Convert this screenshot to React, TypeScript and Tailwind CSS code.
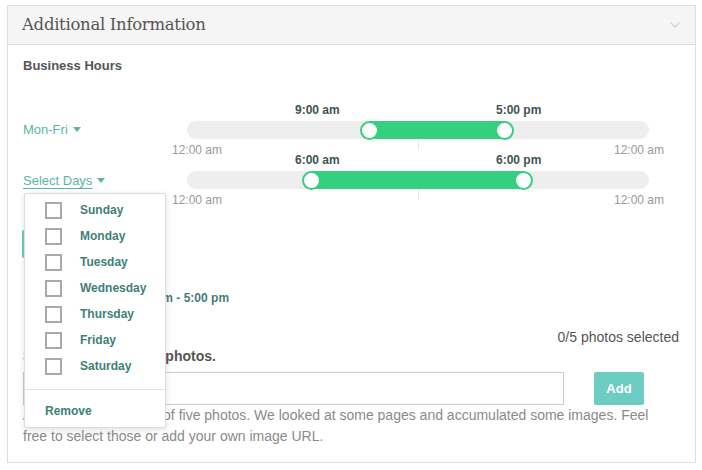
import React from 'react';
import { ChevronDown } from 'lucide-react';

const days = ['Sunday', 'Monday', 'Tuesday', 'Wednesday', 'Thursday', 'Friday', 'Saturday'];

const Caret: React.FC = () => (
  <svg width="8" height="5" viewBox="0 0 8 5" className="inline-block ml-[5px] mb-[2px]">
    <path d="M0 0 L8 0 L4 5 Z" fill="currentColor" />
  </svg>
);

type SliderProps = { startLabel: string; endLabel: string; from: number; to: number };

const HoursSlider: React.FC<SliderProps> = ({ startLabel, endLabel, from, to }) => (
  <div className="w-[462px]">
    <div className="h-[19px] pl-[108px] pt-[1px] flex text-[12px] leading-[14px] font-bold text-[#3d5450]">
      <span className="w-[201px]">{startLabel}</span>
      <span>{endLabel}</span>
    </div>
    <div className="relative h-[18px] rounded-full bg-[#eeeeee]">
      <div className="absolute top-0 h-[18px] bg-[#35d07f]" style={{ left: from, width: to - from }} />
      <div
        className="absolute top-0 w-[19px] h-[19px] -ml-[9px] -mt-[0.5px] rounded-full bg-white border-2 border-[#35d07f]"
        style={{ left: from }}
      />
      <div
        className="absolute top-0 w-[19px] h-[19px] -ml-[9px] -mt-[0.5px] rounded-full bg-white border-2 border-[#35d07f]"
        style={{ left: to }}
      />
    </div>
    <div className="h-[13px] -mx-[15px] flex justify-between text-[12px] leading-[14px] text-[#999]">
      <span className="mt-[4px]">12:00 am</span>
      <span className="w-px h-[11px] bg-[#e8e8e8]" />
      <span className="mt-[4px]">12:00 am</span>
    </div>
  </div>
);

const DaysMenu: React.FC = () => (
  <div className="absolute left-[1px] top-[41px] z-10 w-[142px] h-[235px] bg-white border border-[#dcdcdc] rounded-[2px] shadow-[0_2px_6px_rgba(0,0,0,0.12)]">
    <ul className="pt-[3px] pb-[10px]">
      {days.map((d) => (
        <li key={d} className="h-[26px] flex items-center pl-[20px]">
          <span className="w-[17px] h-[17px] border-2 border-[#a9a9a9] bg-white" />
          <span className="ml-[18px] text-[12px] font-bold text-[#3e8079]">{d}</span>
        </li>
      ))}
    </ul>
    <div className="border-t border-[#e3e3e3] pt-[13px] pl-[20px] text-[12px] font-bold text-[#3e8079]">
      Remove
    </div>
  </div>
);

const App: React.FC = () => {
  return (
    <div className="w-[702px] h-[470px] bg-white pt-[5px] pl-[7px] font-['Liberation_Sans',Arial,sans-serif]">
      <div className="w-[689px] h-[458px] border border-[#dddddd] overflow-hidden">
        <div className="h-[39px] bg-[#f5f5f5] border-b border-[#dddddd] flex items-center justify-between pl-[14px] pr-[12px]">
          <h1 className="font-['DejaVu_Serif',serif] text-[16.5px] tracking-[-0.3px] text-[#555]">Additional Information</h1>
          <ChevronDown size={16} strokeWidth={2} className="text-[#d2d2d2]" />
        </div>

        <div className="relative pl-[15px] pr-[16px] pt-[13px]">
          <h2 className="text-[13px] leading-[16px] font-bold text-[#555]">Business Hours</h2>

          <div className="mt-[28px] flex h-[50px]">
            <div className="w-[164px] pt-[20px] text-[13px] leading-[16px] text-[#5ab5a7]">
              Mon-Fri
              <Caret />
            </div>
            <HoursSlider startLabel="9:00 am" endLabel="5:00 pm" from={182} to={317} />
          </div>

          <div className="flex h-[50px]">
            <div className="relative w-[164px] pt-[21px] text-[13px] leading-[16px] text-[#5ab5a7]">
              <span className="underline underline-offset-[3px]">Select Days</span>
              <Caret />
              <DaysMenu />
            </div>
            <HoursSlider startLabel="6:00 am" endLabel="6:00 pm" from={124} to={336} />
          </div>

          <button className="mt-[28px] h-[28px] w-[120px] ml-[-1px] bg-[#6dcdc2] rounded-[2px] text-white text-[12px] font-bold">
            Add Hours
          </button>

          <p className="mt-[32px] pl-[6px] text-[12px] leading-[16px] font-bold text-[#3e8079]">
            Monday - Friday: 9:00 am - 5:00 pm
          </p>

          <p className="mt-[22px] text-right text-[14px] leading-[18px] text-[#555]">0/5 photos selected</p>

          <h3 className="mt-[1px] text-[14px] leading-[18px] font-bold text-[#555]">Select up to five new photos.</h3>

          <div className="mt-[7px] flex items-start">
            <input className="w-[541px] h-[33px] border border-[#cccccc] px-2 text-[14px] outline-none" />
            <button className="ml-[30px] w-[50px] h-[33px] bg-[#6dcdc2] rounded-[2px] text-white text-[13px] font-bold">
              Add
            </button>
          </div>

          <p className="w-[630px] text-[14px] leading-[21px] text-[#8a8a8a]">
            Add up to a maximum of five photos. We looked at some pages and accumulated some images. Feel free to
            select those or add your own image URL.
          </p>
        </div>
      </div>
    </div>
  );
};

export default App;
